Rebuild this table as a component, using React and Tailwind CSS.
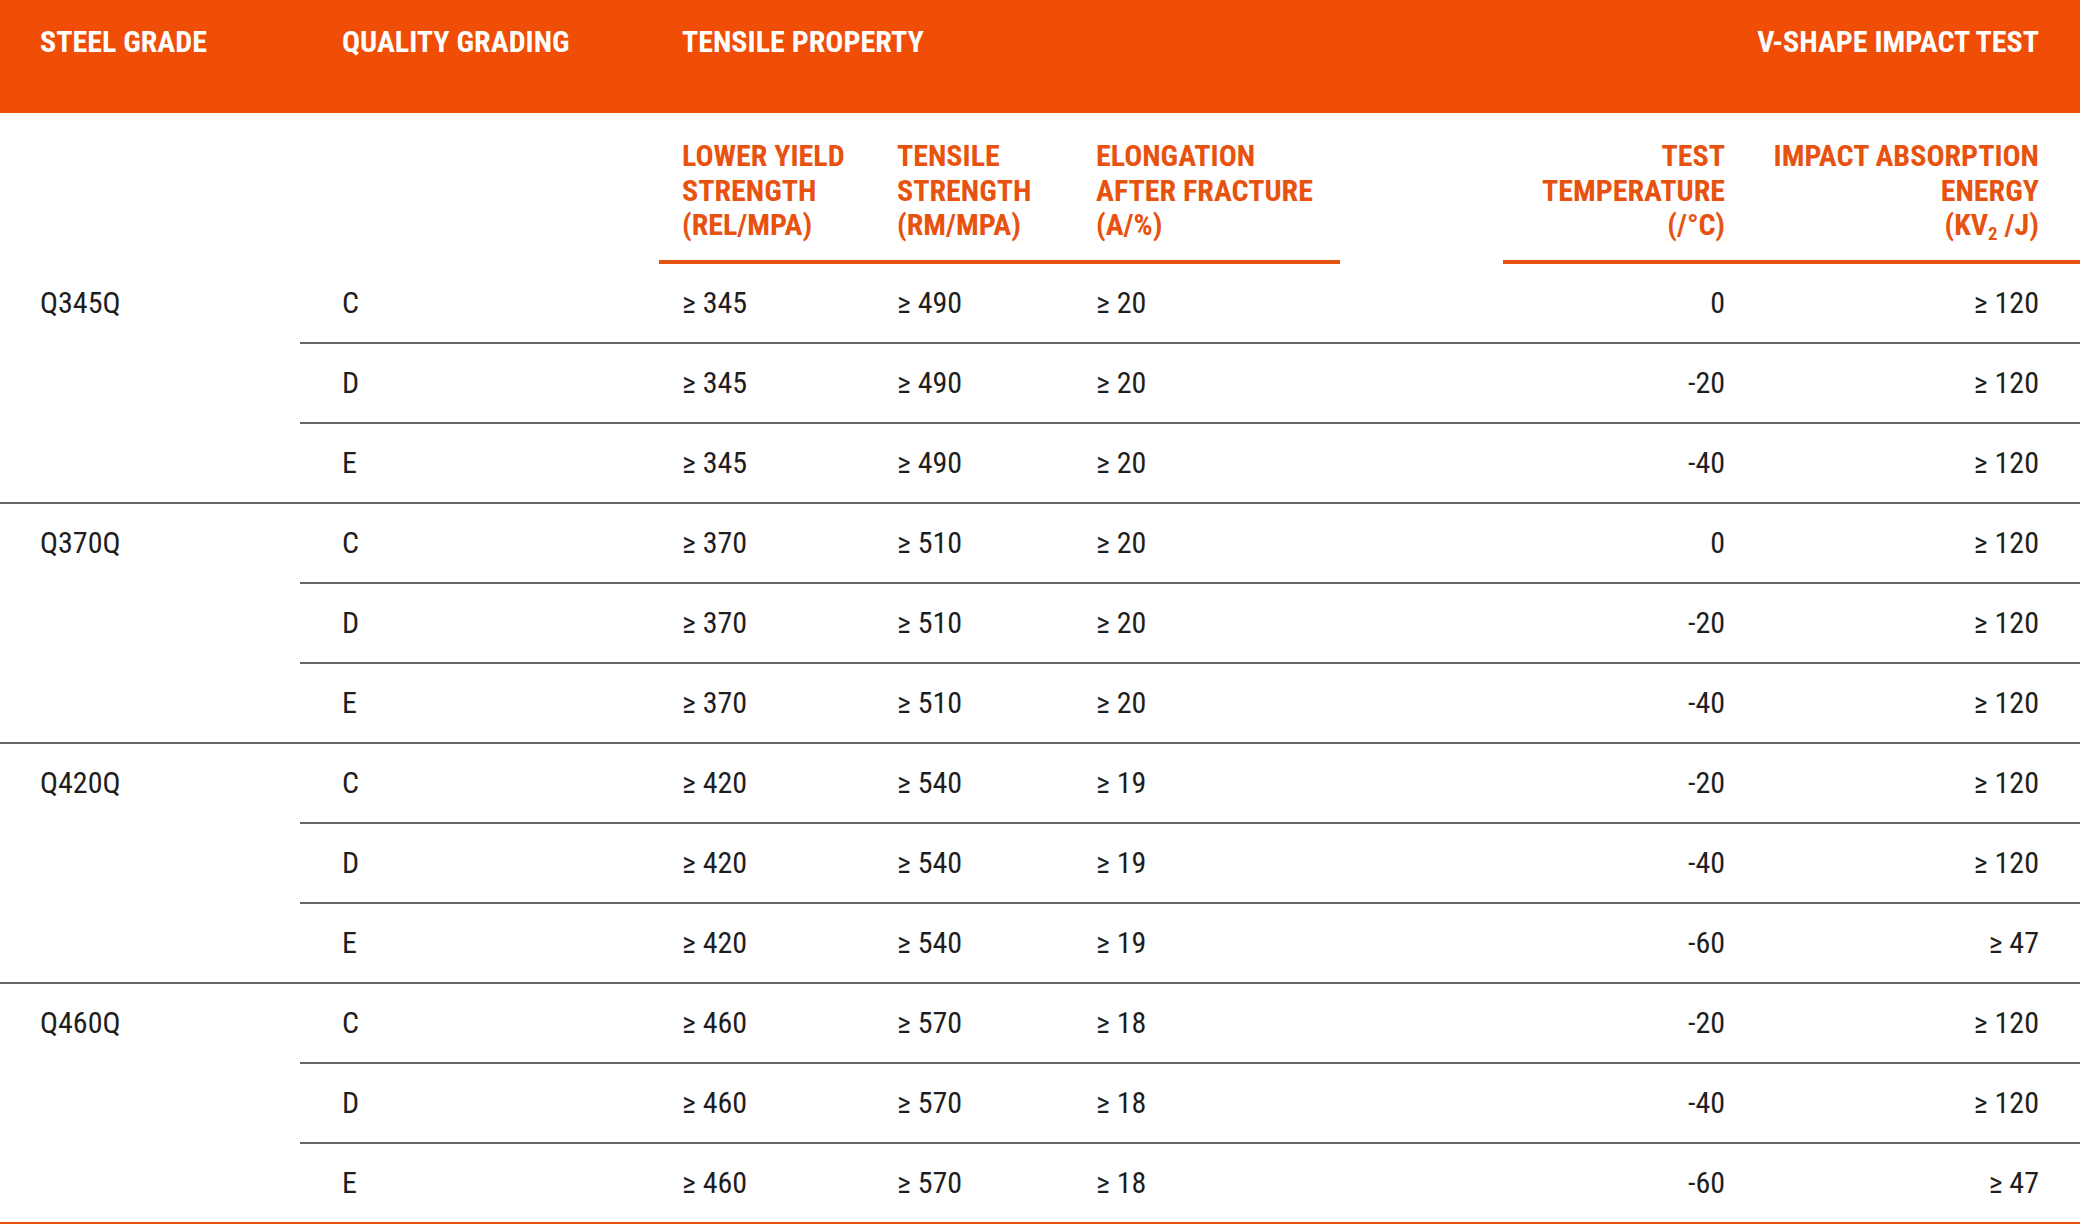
const groups = [
  {
    grade: "Q345Q",
    rows: [
      ["C", "≥ 345", "≥ 490", "≥ 20", "0", "≥ 120"],
      ["D", "≥ 345", "≥ 490", "≥ 20", "-20", "≥ 120"],
      ["E", "≥ 345", "≥ 490", "≥ 20", "-40", "≥ 120"],
    ],
  },
  {
    grade: "Q370Q",
    rows: [
      ["C", "≥ 370", "≥ 510", "≥ 20", "0", "≥ 120"],
      ["D", "≥ 370", "≥ 510", "≥ 20", "-20", "≥ 120"],
      ["E", "≥ 370", "≥ 510", "≥ 20", "-40", "≥ 120"],
    ],
  },
  {
    grade: "Q420Q",
    rows: [
      ["C", "≥ 420", "≥ 540", "≥ 19", "-20", "≥ 120"],
      ["D", "≥ 420", "≥ 540", "≥ 19", "-40", "≥ 120"],
      ["E", "≥ 420", "≥ 540", "≥ 19", "-60", "≥ 47"],
    ],
  },
  {
    grade: "Q460Q",
    rows: [
      ["C", "≥ 460", "≥ 570", "≥ 18", "-20", "≥ 120"],
      ["D", "≥ 460", "≥ 570", "≥ 18", "-40", "≥ 120"],
      ["E", "≥ 460", "≥ 570", "≥ 18", "-60", "≥ 47"],
    ],
  },
];

// column widths measured from x=300 (the quality grading column start)
const cols = "grid grid-cols-[359px_215px_199px_267px_163px_245px_1fr]";

const Header = () => (
  <div className="flex h-[113px] bg-[#f04d06] pt-[24px] text-[30px] leading-[36px] font-bold text-white">
    <div className="w-[300px] shrink-0 pl-10">STEEL GRADE</div>
    <div className={`${cols} flex-1`}>
      <div className="pl-[42px]">QUALITY GRADING</div>
      <div className="col-span-3 pl-[23px]">TENSILE PROPERTY</div>
      <div />
      <div className="col-span-2 pr-[41px] text-right">V-SHAPE IMPACT TEST</div>
    </div>
  </div>
);

const SubHeader = () => (
  <div className="flex pt-[26px] text-[30px] leading-[34.5px] font-bold text-[#e8520f]">
    <div className="w-[300px] shrink-0" />
    <div className={`${cols} flex-1`}>
      <div />
      <div className="border-b-4 border-[#e8520f] pb-[17px] pl-[23px]">
        LOWER YIELD
        <br />
        STRENGTH
        <br />
        (REL/MPA)
      </div>
      <div className="border-b-4 border-[#e8520f] pb-[17px] pl-[23px]">
        TENSILE
        <br />
        STRENGTH
        <br />
        (RM/MPA)
      </div>
      <div className="border-b-4 border-[#e8520f] pb-[17px] pl-[23px]">
        ELONGATION
        <br />
        AFTER FRACTURE
        <br />
        (A/%)
      </div>
      <div />
      <div className="border-b-4 border-[#e8520f] pb-[17px] pr-[23px] text-right">
        TEST
        <br />
        TEMPERATURE
        <br />
        (/°C)
      </div>
      <div className="border-b-4 border-[#e8520f] pb-[17px] pr-[41px] text-right">
        IMPACT ABSORPTION
        <br />
        ENERGY
        <br />
        (KV<sub className="text-[19px]">2</sub> /J)
      </div>
    </div>
  </div>
);

const Group = ({ grade, rows, last }) => (
  <div
    className={`flex ${last ? "border-b-4 border-[#e8520f]" : "border-b-2 border-[#666]"}`}
  >
    <div className="flex h-[78px] w-[300px] shrink-0 items-center pl-10">{grade}</div>
    <div className="flex-1">
      {rows.map((r, i) => (
        <div
          key={i}
          className={`${cols} h-[78px] items-center ${i < rows.length - 1 ? "box-content border-b-2 border-[#666]" : ""}`}
        >
          <div className="pl-[42px]">{r[0]}</div>
          <div className="pl-[23px]">{r[1]}</div>
          <div className="pl-[23px]">{r[2]}</div>
          <div className="pl-[23px]">{r[3]}</div>
          <div />
          <div className="pr-[23px] text-right">{r[4]}</div>
          <div className="pr-[41px] text-right">{r[5]}</div>
        </div>
      ))}
    </div>
  </div>
);

export default function App() {
  return (
    <div className="min-h-screen w-[2080px] bg-white font-['Roboto_Condensed','Liberation_Sans_Narrow','Arial_Narrow',Roboto,sans-serif] text-[#1e1e1e]">
      <Header />
      <SubHeader />
      <div className="text-[30px] leading-[36px]">
        {groups.map((g, i) => (
          <Group key={g.grade} {...g} last={i === groups.length - 1} />
        ))}
      </div>
    </div>
  );
}
